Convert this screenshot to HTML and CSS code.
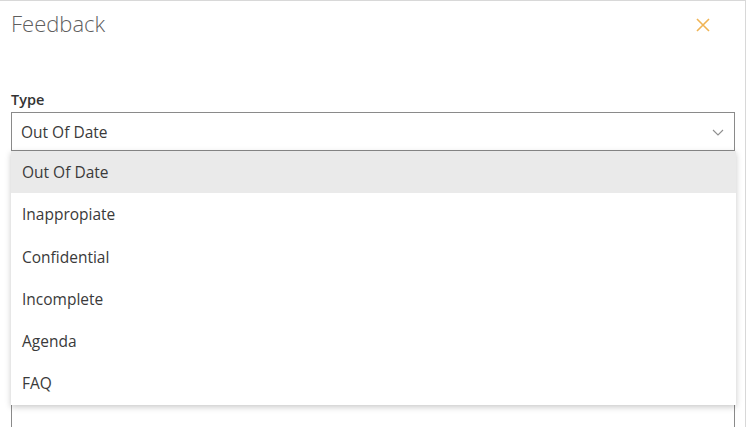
FILE: index.html
```html
<!DOCTYPE html>
<html lang="en">

<head>
    <meta charset="UTF-8">
    <title>Feedback</title>
    <link rel="stylesheet" href="styles.css">
</head>

<body>
    <div class="panel">
        <header class="panel-header">
            <h1>Feedback</h1>
            <button class="close-btn" aria-label="Close">
                <svg width="14" height="14" viewBox="0 0 14 14">
                    <path d="M1 1 L13 13 M13 1 L1 13" stroke="#f0b454" stroke-width="1.6" fill="none" />
                </svg>
            </button>
        </header>

        <div class="field">
            <label class="field-label">Type</label>
            <div class="select">
                <span class="select-value">Out Of Date</span>
                <svg class="chevron" width="12" height="7" viewBox="0 0 12 7">
                    <path d="M1 1 L6 6 L11 1" stroke="#8f8f8f" stroke-width="1.1" fill="none" />
                </svg>
            </div>
            <ul class="dropdown">
                <li class="selected">Out Of Date</li>
                <li>Inappropiate</li>
                <li>Confidential</li>
                <li>Incomplete</li>
                <li>Agenda</li>
                <li>FAQ</li>
            </ul>
        </div>

        <div class="field comments">
            <div class="textarea"></div>
        </div>
    </div>
</body>

</html>
```

FILE: styles.css
```css
* {
    margin: 0;
    padding: 0;
    box-sizing: border-box;
    font-family: 'Open Sans', sans-serif;
    list-style: none;
}

body {
    background-color: #fff;
    overflow: hidden;
}

.panel {
    width: 746px;
    height: 427px;
    border-top: 1px solid #d8d8d8;
    border-right: 1px solid #d8d8d8;
    padding: 0 11px;
    position: relative;
    overflow: hidden;
}

.panel-header {
    display: flex;
    justify-content: space-between;
    align-items: center;
    height: 44px;
}

.panel-header h1 {
    font-size: 22px;
    font-weight: 300;
    color: #5f5f5f;
}

.close-btn {
    background: none;
    border: none;
    width: 14px;
    height: 14px;
    margin-right: 24px;
    margin-top: 3px;
    cursor: pointer;
}

.field {
    position: relative;
    margin-top: 43px;
}

.field-label {
    display: block;
    font-size: 14.5px;
    font-weight: 600;
    color: #333;
    line-height: 24px;
}

.select {
    display: flex;
    justify-content: space-between;
    align-items: center;
    width: 724px;
    height: 39px;
    border: 1px solid #8a8a8a;
    padding: 0 10px 0 9px;
}

.select-value {
    font-size: 15.5px;
    color: #3a3a3a;
}

.chevron {
    margin-top: 1px;
}

.dropdown {
    position: absolute;
    top: 63px;
    left: 0;
    width: 725px;
    background-color: #fff;
    box-shadow: 0 2px 6px rgba(0, 0, 0, 0.22);
    z-index: 10;
}

.dropdown li {
    height: 42.3px;
    line-height: 42px;
    padding-left: 11px;
    font-size: 15.5px;
    color: #3a3a3a;
}

.dropdown li.selected {
    background-color: #eaeaea;
}

.comments {
    margin-top: 40px;
}

.textarea {
    width: 724px;
    height: 260px;
    border: 1px solid #8a8a8a;
}
```
